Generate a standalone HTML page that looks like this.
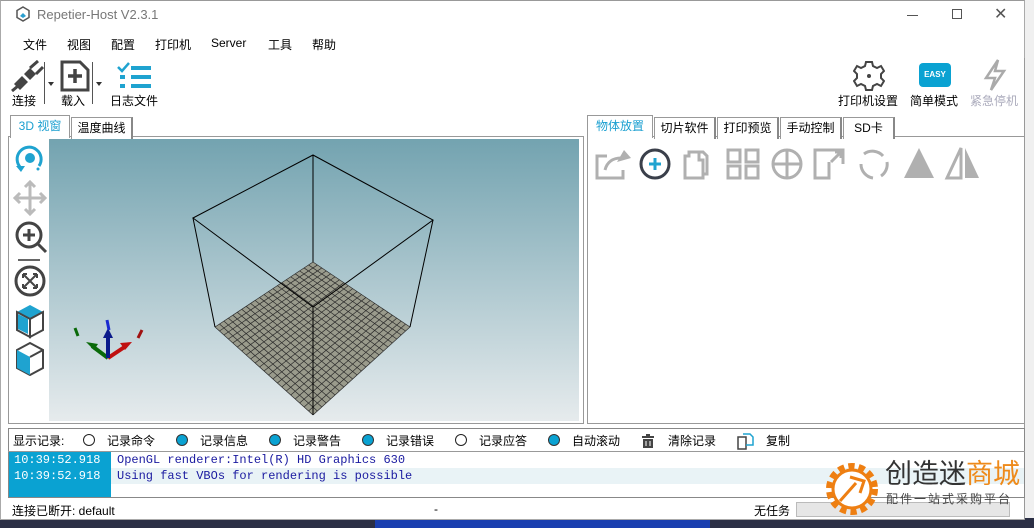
<!DOCTYPE html>
<html><head><meta charset="utf-8"><style>
*{margin:0;padding:0;box-sizing:border-box}
body{width:1034px;height:528px;overflow:hidden;background:#f0f0f0;font-family:"Liberation Sans","Noto Sans CJK SC",sans-serif;font-size:12px;color:#000;position:relative}
.abs{position:absolute}
.win{position:absolute;left:0;top:0;width:1025px;height:520px;background:#fff;border:1px solid #aaa;border-top-color:#999}
.menu span{position:absolute;top:36px;font-size:12px}
.tb{position:absolute;font-size:12px;text-align:center}
.tab{position:absolute;height:22px;border:1px solid #999;border-bottom:none;background:#fff;font-size:12px;line-height:20px;text-align:center}
.rad{position:absolute;top:434px;width:12px;height:12px;border-radius:50%;border:1.5px solid #222;background:#fff}
.rad.on{background:#0aa2d2;border-color:#333}
.lbl{position:absolute;top:432px;font-size:12px}
.mono{font-family:"Liberation Mono",monospace;font-size:12px}
</style></head><body>
<div class="abs" style="left:0;top:140px;width:9px;height:150px;background:#2a2e44"></div>
<div class="abs" style="left:0;top:220px;width:9px;height:45px;background:#4a5278"></div>
<div class="abs" style="left:0;top:518px;width:1034px;height:10px;background:#2b2f45"></div>
<div class="abs" style="left:375px;top:518px;width:335px;height:10px;background:#1a3fb0"></div>
<div class="win"></div>
<svg class="abs" style="left:15px;top:6px" width="16" height="16" viewBox="0 0 16 16"><path d="M8 1 14 4.5V11.5L8 15 2 11.5V4.5Z" fill="none" stroke="#555" stroke-width="1.5"/><path d="M5 10 8 7 11 10 8 12Z" fill="#2a9fd0"/></svg>
<div class="abs" style="left:37px;top:7px;font-size:13px;color:#777">Repetier-Host V2.3.1</div>
<div class="abs" style="left:907px;top:15px;width:11px;height:1px;background:#555"></div>
<div class="abs" style="left:952px;top:9px;width:10px;height:10px;border:1px solid #555"></div>
<div class="abs" style="left:994px;top:4px;font-size:16px;color:#555">✕</div>
<div class="menu"><span style="left:23px">文件</span><span style="left:67px">视图</span><span style="left:111px">配置</span><span style="left:155px">打印机</span><span style="left:211px">Server</span><span style="left:268px">工具</span><span style="left:312px">帮助</span></div>
<svg class="abs" style="left:10px;top:60px" width="34" height="32" viewBox="0 0 34 32"><path d="M4 24 12 16 18 22 10 30Z M14 14 20 8 26 14 20 20Z" fill="#444"/><path d="M20 8 28 1 M26 14 33 7 M2 31 8 26" stroke="#444" stroke-width="3"/></svg>
<div class="tb" style="left:12px;top:92px">连接</div>
<div class="abs" style="left:44px;top:62px;width:1px;height:42px;background:#555"></div>
<div class="abs" style="left:48px;top:82px;border:3px solid transparent;border-top:4px solid #333"></div>
<svg class="abs" style="left:60px;top:60px" width="30" height="32" viewBox="0 0 30 32"><path d="M2 2H20L28 10V30H2Z" fill="none" stroke="#444" stroke-width="3"/><path d="M15 9V23M8 16H22" stroke="#444" stroke-width="3.5"/></svg>
<div class="tb" style="left:61px;top:92px">载入</div>
<div class="abs" style="left:92px;top:62px;width:1px;height:42px;background:#555"></div>
<div class="abs" style="left:96px;top:82px;border:3px solid transparent;border-top:4px solid #333"></div>
<svg class="abs" style="left:117px;top:61px" width="36" height="30" viewBox="0 0 36 30"><path d="M1 6 5 10 12 2" fill="none" stroke="#1fa3d0" stroke-width="2.5"/><rect x="14" y="5" width="20" height="4" fill="#1fa3d0"/><rect x="3" y="14" width="5" height="4" fill="#1fa3d0"/><rect x="14" y="14" width="20" height="4" fill="#1fa3d0"/><rect x="3" y="23" width="5" height="4" fill="#1fa3d0"/><rect x="14" y="23" width="20" height="4" fill="#1fa3d0"/></svg>
<div class="tb" style="left:110px;top:92px">日志文件</div>
<svg class="abs" style="left:853px;top:60px" width="32" height="32" viewBox="0 0 32 32"><path d="M13 2H19L20 6 24 8 28 6 31 11 28 14V18L31 21 28 26 24 24 20 26 19 30H13L12 26 8 24 4 26 1 21 4 18V14L1 11 4 6 8 8 12 6Z" fill="none" stroke="#444" stroke-width="2"/><circle cx="16" cy="16" r="2" fill="#444"/></svg>
<div class="tb" style="left:838px;top:92px">打印机设置</div>
<div class="abs" style="left:919px;top:63px;width:32px;height:24px;border-radius:4px;background:#0aa2d2;color:#fff;font-size:8px;font-weight:bold;text-align:center;line-height:24px">EASY</div>
<div class="tb" style="left:910px;top:92px">简单模式</div>
<svg class="abs" style="left:982px;top:58px" width="26" height="34" viewBox="0 0 26 34"><path d="M16 2 4 20H13L9 32 22 13H13Z" fill="none" stroke="#aaa" stroke-width="2.5"/></svg>
<div class="tb" style="left:970px;top:92px;color:#aab">紧急停机</div>
<div class="abs" style="left:1024px;top:58px;width:1px;height:462px;background:#999"></div>
<div class="abs" style="left:8px;top:136px;width:576px;height:288px;border:1px solid #999;background:#fff"></div>
<div class="tab" style="left:10px;top:115px;width:60px;color:#1a9fd0;height:23px">3D 视窗</div>
<div class="tab" style="left:71px;top:117px;width:62px;border-right:2px solid #888">温度曲线</div>
<div class="abs" style="left:49px;top:139px;width:530px;height:282px;background:linear-gradient(#73a3b0,#e6ebed)"></div>
<svg class="abs" style="left:13px;top:142px" width="36" height="234" viewBox="0 0 36 234">
<path d="M8 26A12 12 0 1 1 26 24" fill="none" stroke="#1fa3d0" stroke-width="3"/><circle cx="17" cy="16" r="5" fill="#1fa3d0"/><path d="M3 24 8 30 12 24" fill="#1fa3d0"/><circle cx="25" cy="27" r="1.5" fill="#1fa3d0"/>
<path d="M17 40V72M2 56H32M12 45 17 40 22 45M12 67 17 72 22 67M7 51 2 56 7 61M27 51 32 56 27 61" fill="none" stroke="#bbb" stroke-width="3"/>
<circle cx="16" cy="93" r="12" fill="none" stroke="#444" stroke-width="3"/><path d="M25 102 33 110M16 87V99M10 93H22" stroke="#444" stroke-width="3"/>
<path d="M5 118H27" stroke="#333" stroke-width="1.5"/>
<circle cx="17" cy="139" r="14" fill="none" stroke="#444" stroke-width="3"/><path d="M10 132 24 146M24 132 10 146M10 132H14M10 132V136M24 146H20M24 146V142M24 132H20M24 132V136M10 146H14M10 146V142" stroke="#444" stroke-width="2"/>
<path d="M4 170 17 163 30 170 17 177Z" fill="#1fa3d0"/><path d="M4 170V188L17 195V177ZM30 170V188L17 195V177Z" fill="none" stroke="#444" stroke-width="2"/><path d="M5 172V187L15 192V177Z" fill="#1fa3d0"/>
<path d="M4 208 17 201 30 208V226L17 233 4 226Z" fill="none" stroke="#444" stroke-width="2"/><path d="M4 208 17 215V233L4 226Z" fill="#1fa3d0"/><path d="M17 215 30 208" stroke="#444" stroke-width="2"/>
</svg>
<svg class="abs" style="left:70px;top:318px" width="80" height="45" viewBox="0 0 80 45"><path d="M38 40 22 28" stroke="#0a6a0a" stroke-width="4"/><path d="M16 24 28 26 24 32Z" fill="#0a6a0a"/><path d="M38 40 56 28" stroke="#c01010" stroke-width="4"/><path d="M62 24 50 25 55 32Z" fill="#c01010"/><path d="M38 40V18" stroke="#0a1a8a" stroke-width="4"/><path d="M33 20 38 10 43 20Z" fill="#0a1a8a"/><path d="M37 2 39 12" stroke="#1a2ad0" stroke-width="3"/><path d="M5 10 8 18" stroke="#0a6a0a" stroke-width="3"/><path d="M72 12 68 20" stroke="#a01010" stroke-width="3"/></svg>
<svg class="abs" style="left:0;top:0" width="600" height="430">
<polygon points="313,262 410,327 313,415 215,327" fill="#9a9b8c"/>
<g id="grid" stroke="#2a2a2a" stroke-width="0.7"></g>
<g fill="none" stroke="#000" stroke-width="1">
<path d="M313 155 433 220 313 307 193 218Z"/>
<path d="M313 155V262M193 218 215 327M433 220 410 327M313 307V415"/>
</g></svg>
<script>
(function(){var g=document.getElementById('grid'),s='';var B=[313,262],L=[215,327],R=[410,327],F=[313,415];
function p(a,b,t){return [a[0]+(b[0]-a[0])*t,a[1]+(b[1]-a[1])*t]}
var N=22;for(var i=0;i<=N;i++){var t=i/N;var a=p(B,R,t),b=p(L,F,t);s+='<line x1="'+a[0]+'" y1="'+a[1]+'" x2="'+b[0]+'" y2="'+b[1]+'"/>';a=p(B,L,t);b=p(R,F,t);s+='<line x1="'+a[0]+'" y1="'+a[1]+'" x2="'+b[0]+'" y2="'+b[1]+'"/>';}
g.innerHTML=s;})();
</script>
<div class="abs" style="left:587px;top:136px;width:438px;height:288px;border:1px solid #999;background:#fff"></div>
<div class="tab" style="left:587px;top:115px;width:66px;color:#1a9fd0;height:23px">物体放置</div>
<div class="tab" style="left:654px;top:117px;width:62px;border-right:2px solid #888">切片软件</div>
<div class="tab" style="left:717px;top:117px;width:62px;border-right:2px solid #888">打印预览</div>
<div class="tab" style="left:780px;top:117px;width:62px;border-right:2px solid #888">手动控制</div>
<div class="tab" style="left:843px;top:117px;width:52px;border-right:2px solid #888">SD卡</div>
<svg class="abs" style="left:593px;top:146px" width="400" height="36" viewBox="0 0 400 36">
<g fill="none" stroke="#b0b0b0" stroke-width="3">
<path d="M14 10H4V32H30V24"/><path d="M12 24C14 16 20 12 28 12"/>
<path d="M92 10V32H110V14H106V6H96V10Z"/><path d="M98 6H110L114 10V28H110"/>
<rect x="135" y="4" width="12" height="12"/><rect x="153" y="4" width="12" height="12"/><rect x="135" y="20" width="12" height="12"/><rect x="153" y="20" width="12" height="12"/>
<circle cx="194" cy="18" r="14"/><path d="M194 4V32M180 18H208"/>
<path d="M236 16V32H222V4H250V18"/><path d="M238 16 248 6M242 6H248V12" />
<path d="M271 8A14 14 0 0 1 290 10M294 16A14 14 0 0 1 288 30M280 32A14 14 0 0 1 268 18"/>
</g>
<path d="M31 4 24 16 38 12Z" fill="#b0b0b0"/>
<circle cx="62" cy="18" r="14" fill="none" stroke="#3a3f4a" stroke-width="3"/><path d="M62 12V24M56 18H68" stroke="#1fa3d0" stroke-width="3"/>
<path d="M326 2 341 32H311Z" fill="#b0b0b0"/>
<path d="M368 2V32H354Z" fill="none" stroke="#b0b0b0" stroke-width="3"/><path d="M372 2 386 32H372Z" fill="#b0b0b0"/>
</svg>
<div class="abs" style="left:8px;top:428px;width:1017px;height:70px;border:1px solid #888;background:#fff"></div>
<div class="lbl" style="left:13px">显示记录:</div>
<div class="rad" style="left:83px"></div><div class="lbl" style="left:107px">记录命令</div>
<div class="rad on" style="left:176px"></div><div class="lbl" style="left:200px">记录信息</div>
<div class="rad on" style="left:269px"></div><div class="lbl" style="left:293px">记录警告</div>
<div class="rad on" style="left:362px"></div><div class="lbl" style="left:386px">记录错误</div>
<div class="rad" style="left:455px"></div><div class="lbl" style="left:479px">记录应答</div>
<div class="rad on" style="left:548px"></div><div class="lbl" style="left:572px">自动滚动</div>
<svg class="abs" style="left:640px;top:433px" width="16" height="16"><rect x="2" y="3" width="12" height="2" fill="#444"/><rect x="6" y="1" width="4" height="2" fill="#444"/><path d="M3 6H13V15H3Z" fill="#444"/><path d="M6 8V13M10 8V13" stroke="#fff"/></svg>
<div class="lbl" style="left:668px">清除记录</div>
<svg class="abs" style="left:737px;top:433px" width="18" height="17"><path d="M1 4H9V16H1Z" fill="#fff" stroke="#444" stroke-width="1.5"/><path d="M6 1H13L16 4V12H9" fill="none" stroke="#1fa3d0" stroke-width="1.5"/></svg>
<div class="lbl" style="left:766px">复制</div>
<div class="abs" style="left:8px;top:451px;width:1017px;height:1px;background:#999"></div>
<div class="abs" style="left:9px;top:452px;width:102px;height:45px;background:#0aa2d2"></div>
<div class="abs" style="left:111px;top:468px;width:913px;height:16px;background:#e9f3f6"></div>
<div class="abs mono" style="left:14px;top:453px;color:#fff">10:39:52.918</div>
<div class="abs mono" style="left:14px;top:469px;color:#fff">10:39:52.918</div>
<div class="abs mono" style="left:117px;top:453px;color:#1a1aa0">OpenGL renderer:Intel(R) HD Graphics 630</div>
<div class="abs mono" style="left:117px;top:469px;color:#1a1aa0">Using fast VBOs for rendering is possible</div>
<div class="abs" style="left:12px;top:502px">连接已断开: default</div>
<div class="abs" style="left:434px;top:502px">-</div>
<div class="abs" style="left:754px;top:502px">无任务</div>
<div class="abs" style="left:796px;top:502px;width:214px;height:15px;border:1px solid #bbb;background:#e6e6e6"></div>
<svg class="abs" style="left:820px;top:457px" width="64" height="64" viewBox="0 0 64 64"><circle cx="32" cy="32" r="22" fill="none" stroke="#ee7f12" stroke-width="8" stroke-dasharray="6 4"/><circle cx="32" cy="32" r="19" fill="#fff" stroke="#ee7f12" stroke-width="3"/><path d="M20 44 36 26M30 20 44 24 40 36" fill="none" stroke="#ee7f12" stroke-width="3"/></svg>
<div class="abs" style="left:885px;top:459px;font-size:27px;line-height:30px;color:#333;letter-spacing:0px">创造迷<span style="color:#ee8a1a">商城</span></div>
<div class="abs" style="left:886px;top:492px;font-size:12px;line-height:14px;color:#444;letter-spacing:2px">配件一站式采购平台</div>
</body></html>
